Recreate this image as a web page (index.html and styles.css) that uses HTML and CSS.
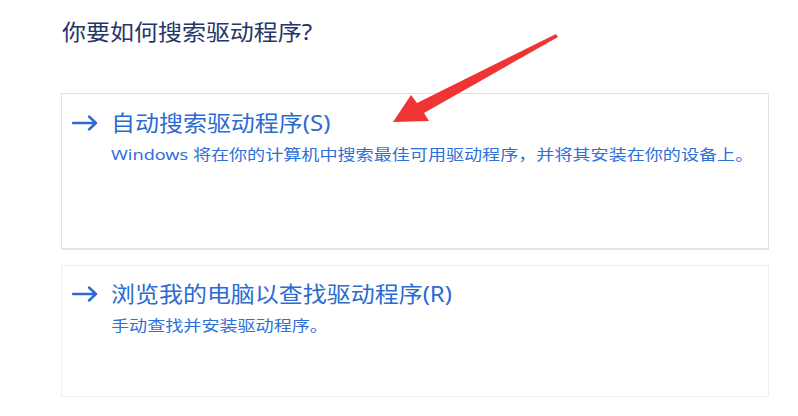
FILE: index.html
```html
<!DOCTYPE html>
<html lang="zh-CN">
<head>
<meta charset="utf-8">
<link rel="stylesheet" href="styles.css">
</head>
<body>
<div class="page">
  <h1 class="heading"><span class="stretch">你要如何搜索驱动程序?</span></h1>
  <div class="card card-first">
    <div class="option-title">
      <svg class="go" viewBox="0 0 26 16" width="26" height="16"><path d="M1 8 H24 M17 1.5 L24 8 L17 14.5" fill="none" stroke="#2c6bd1" stroke-width="2.4" stroke-linecap="round" stroke-linejoin="round"/></svg>
      <span class="title-text stretch">自动搜索驱动程序(S)</span>
    </div>
    <div class="option-desc"><span class="stretch">Windows 将在你的计算机中搜索最佳可用驱动程序，并将其安装在你的设备上。</span></div>
  </div>
  <div class="card card-second">
    <div class="option-title">
      <svg class="go" viewBox="0 0 26 16" width="26" height="16"><path d="M1 8 H24 M17 1.5 L24 8 L17 14.5" fill="none" stroke="#2c6bd1" stroke-width="2.4" stroke-linecap="round" stroke-linejoin="round"/></svg>
      <span class="title-text stretch">浏览我的电脑以查找驱动程序(R)</span>
    </div>
    <div class="option-desc"><span class="stretch">手动查找并安装驱动程序。</span></div>
  </div>
  <svg class="red-arrow" viewBox="0 0 798 416" width="798" height="416">
    <polygon points="393,122 411,95 417,103 556,34 558,37 424,113 429,121" fill="#ef3434"/>
  </svg>
</div>
</body>
</html>
```

FILE: styles.css
```css
* { box-sizing: border-box; }
html, body { margin: 0; padding: 0; background: #ffffff; }
body {
  font-family: "Noto Sans", "Noto Sans CJK SC", sans-serif;
  width: 798px;
  height: 416px;
  overflow: hidden;
}
.page {
  position: relative;
  width: 798px;
  height: 416px;
  padding-left: 61px;
  padding-top: 16px;
}
.stretch {
  display: inline-block;
  transform-origin: left center;
  white-space: nowrap;
}
.heading {
  margin: 0 0 47px 1px;
  font-size: 22px;
  line-height: 30px;
  font-weight: 400;
  color: #26366a;
}
.heading .stretch { transform: scaleX(1.09); }
.card {
  width: 708px;
  border: 1px solid #dde2ea;
  background: #ffffff;
  padding: 14px 10px 0 10px;
}
.card-first {
  height: 157px;
  border-bottom: 2px solid #e1e4e9;
}
.card-second {
  margin-top: 15px;
  height: 132px;
  border-color: #eceef1;
  padding-top: 13px;
}
.option-title {
  display: flex;
  align-items: center;
  gap: 13px;
  height: 30px;
}
.go { flex: none; }
.title-text {
  font-size: 21.5px;
  line-height: 30px;
  color: #2c6bd1;
  transform: scaleX(1.115);
}
.option-desc {
  margin-top: 5px;
  padding-left: 39px;
  font-size: 15px;
  line-height: 22px;
  color: #2f70d8;
  white-space: nowrap;
}
.option-desc .stretch { transform: scaleX(1.205); }
.red-arrow {
  position: absolute;
  left: 0;
  top: 0;
  pointer-events: none;
}
```
